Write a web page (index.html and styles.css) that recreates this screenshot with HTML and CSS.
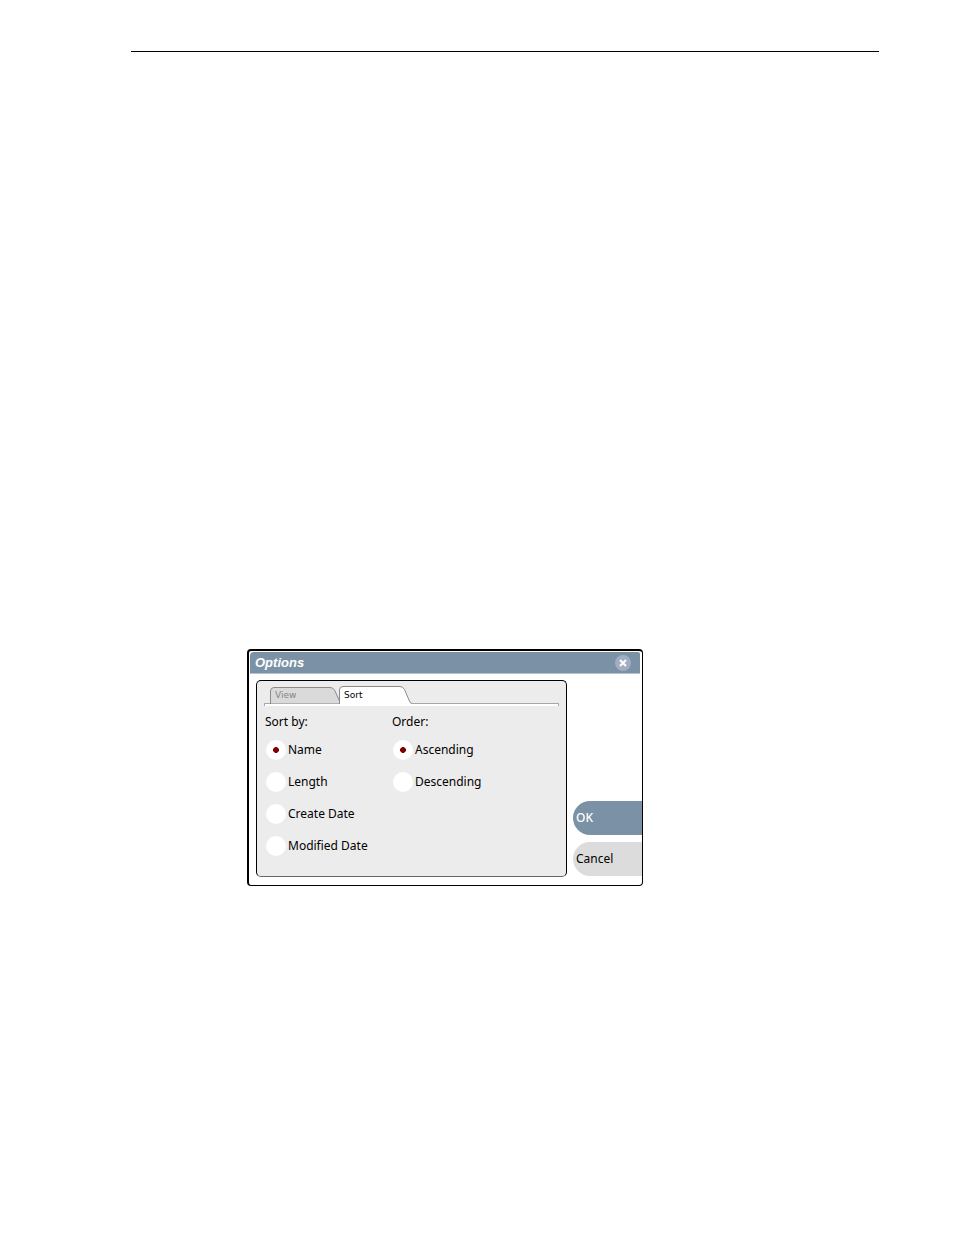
FILE: index.html
```html
<!DOCTYPE html>
<html lang="en">
<head>
    <meta charset="UTF-8">
    <meta name="viewport" content="width=device-width, initial-scale=1.0">
    <title>Options</title>
    <link rel="stylesheet" href="styles.css">
</head>
<body>
    <main class="page">
        <hr class="rule">

        <form class="dialog">
            <header class="title-bar">
                <h1>Options</h1>
                <button type="button" class="close" aria-label="Close">
                    <svg width="16" height="16" viewBox="0 0 16 16">
                        <circle cx="8" cy="8" r="8" fill="#a2aec2"/>
                        <path d="M5 5l6 6M11 5l-6 6" stroke="#fff" stroke-width="2"/>
                    </svg>
                </button>
            </header>

            <div class="content">
                <section class="panel">
                    <nav class="tabs">
                        <button type="button" class="tab">
                            <svg class="shape" width="72" height="18" viewBox="0 0 72 18">
                                <path d="M.5 18V5Q.5 1.500 4 1.500H60Q63 1.500 64.500 4L70 16V18Z" fill="#dadada" stroke="#8a8a8a"/>
                            </svg>
                            <span>View</span>
                        </button>
                        <button type="button" class="tab active">
                            <svg class="shape" width="73" height="18" viewBox="0 0 73 18">
                                <path d="M.5 18V4Q.5 .5 4 .5H61Q64 .5 65.500 3.500L70 14Q71 17.500 73 17.500V18Z" fill="#fff"/>
                                <path d="M.5 18V4Q.5 .5 4 .5H61Q64 .5 65.500 3.500L70 14Q71 17.500 73 17.500" fill="none" stroke="#8a8a8a"/>
                            </svg>
                            <span>Sort</span>
                        </button>
                    </nav>

                    <div class="groups">
                        <fieldset>
                            <legend>Sort by:</legend>
                            <label><input type="radio" name="sort" checked>Name</label>
                            <label><input type="radio" name="sort">Length</label>
                            <label><input type="radio" name="sort">Create Date</label>
                            <label><input type="radio" name="sort">Modified Date</label>
                        </fieldset>
                        <fieldset>
                            <legend>Order:</legend>
                            <label><input type="radio" name="order" checked>Ascending</label>
                            <label><input type="radio" name="order">Descending</label>
                        </fieldset>
                    </div>
                </section>

                <div class="actions">
                    <button type="submit" class="action ok">OK</button>
                    <button type="button" class="action">Cancel</button>
                </div>
            </div>
        </form>
    </main>
</body>
</html>
```
FILE: styles.css
```css
* {
    box-sizing: border-box;
}

body {
    margin: 0;
    background: #fff;
    color: #000;
    font-family: "Noto Sans", sans-serif;
    font-size: 12px;
    line-height: 16px;
}

button {
    padding: 0;
    border: none;
    background: none;
    font: inherit;
    color: inherit;
    cursor: pointer;
}

.page {
    padding: 51px 75px 40px 131px;
}

.rule {
    height: 1px;
    margin: 0 0 597px;
    border: none;
    background: #000;
}

.dialog {
    max-width: 396px;
    margin-left: 116px;
    border: solid #000;
    border-width: 2px 1px 1px 2px;
    border-radius: 4px;
    overflow: hidden;
}

.title-bar {
    display: flex;
    align-items: center;
    justify-content: space-between;
    height: 22px;
    margin: 1px 2px 0 1px;
    padding: 0 9px 0 5px;
    border-bottom: 1px solid #b8c3cf;
    border-radius: 4px 2px 0 0;
    background: #7b91a5;
    color: #fff;
}

.title-bar h1 {
    margin: 0;
    font: italic bold 13px/20px "Liberation Sans", Arial, sans-serif;
}

.close {
    display: flex;
}

.content {
    display: flex;
    gap: 6px;
    padding: 6px 0 8px 7px;
}

.panel {
    flex: 1;
    padding: 5px 7px 20px;
    border: 1px solid #000;
    border-bottom-color: #666;
    border-radius: 5px;
    background: #edecec;
}

.tabs {
    display: flex;
    height: 20px;
    padding-left: 6px;
    background:
        linear-gradient(#a8a8a8, #a8a8a8) 0 17px / 100% 1px no-repeat,
        linear-gradient(#a8a8a8, #a8a8a8) 0 18px / 1px 2px no-repeat,
        linear-gradient(#a8a8a8, #a8a8a8) 100% 18px / 1px 2px no-repeat,
        linear-gradient(#fff, #fff) 0 18px / 100% 2px no-repeat;
}

.tab {
    position: relative;
    width: 69px;
    height: 18px;
    padding-left: 5px;
    color: #858585;
    font: 9px/18px "DejaVu Sans", sans-serif;
    text-align: left;
}

.tab.active {
    color: #000;
}

.tab .shape {
    position: absolute;
    top: 0;
    left: 0;
}

.tab span {
    position: relative;
}

.groups {
    display: grid;
    grid-template-columns: 127px 1fr;
    padding: 8px 1px 0;
}

fieldset {
    display: flex;
    flex-direction: column;
    gap: 12px;
    min-width: 0;
    margin: 0;
    padding: 0;
    border: none;
}

legend {
    margin-bottom: 10px;
    padding: 0;
}

label {
    display: flex;
    align-items: center;
    gap: 2px;
    height: 20px;
    padding-left: 1px;
}

input[type="radio"] {
    appearance: none;
    display: grid;
    place-items: center;
    width: 20px;
    height: 20px;
    margin: 0;
    border-radius: 50%;
    background: #fff;
}

/* small diamond mark */
input[type="radio"]:checked::before {
    content: "";
    width: 6px;
    height: 6px;
    background: #800000;
    clip-path: polygon(35% 0, 65% 0, 100% 35%, 100% 65%, 65% 100%, 35% 100%, 0 65%, 0 35%);
}

.actions {
    display: flex;
    flex-direction: column;
    justify-content: flex-end;
    gap: 7px;
    width: 69px;
    padding-bottom: 1px;
}

.action {
    height: 34px;
    padding-left: 3px;
    border-radius: 17px 0 0 17px;
    background: #dcdcdc;
    text-align: left;
}

.action.ok {
    background: #7b91a5;
    color: #fff;
    font-weight: 500;
}
```
